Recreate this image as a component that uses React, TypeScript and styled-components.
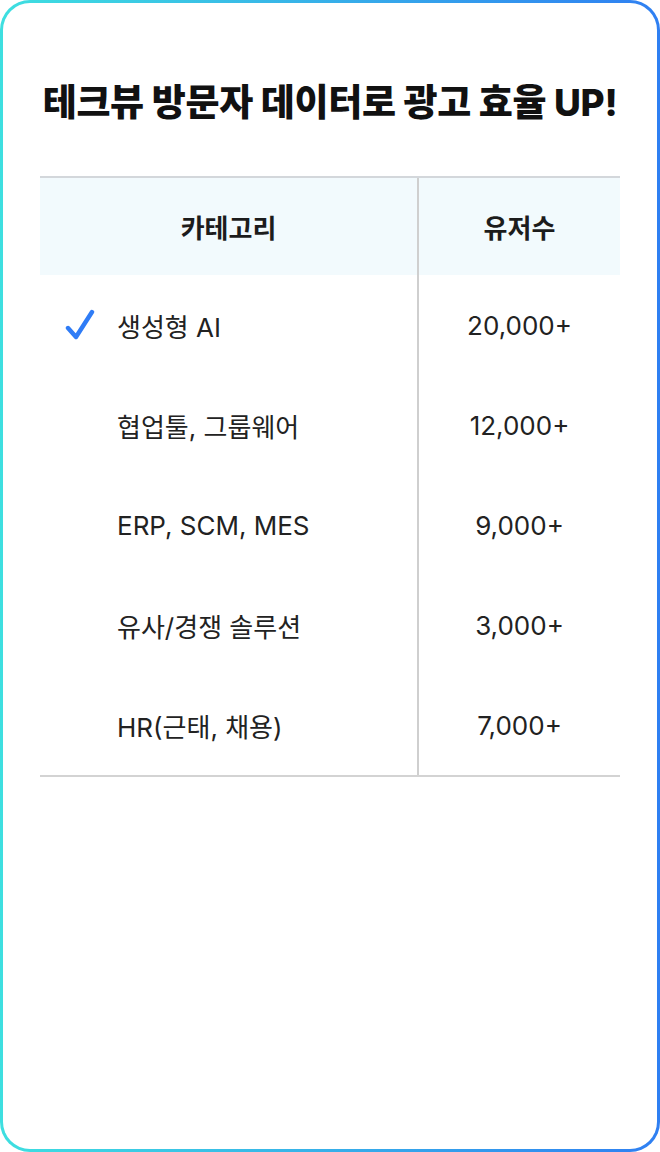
import styled, { createGlobalStyle } from 'styled-components'

const GlobalStyle = createGlobalStyle`
  html, body {
    margin: 0;
    padding: 0;
    background: #ffffff;
  }
  body {
    font-family: Inter, 'Noto Sans CJK KR', sans-serif;
  }
`

const rows = [
  { name: '생성형 AI', users: '20,000+', checked: true },
  { name: '협업툴, 그룹웨어', users: '12,000+', checked: false },
  { name: 'ERP, SCM, MES', users: '9,000+', checked: false },
  { name: '유사/경쟁 솔루션', users: '3,000+', checked: false },
  { name: 'HR(근태, 채용)', users: '7,000+', checked: false },
]

export default function App() {
  return (
    <>
      <GlobalStyle />
      <Frame>
        <Card>
          <Title>테크뷰 방문자 데이터로 광고 효율 UP!</Title>
          <Table>
            <HeadRow>
              <HeadCell>카테고리</HeadCell>
              <HeadCell $last>유저수</HeadCell>
            </HeadRow>
            {rows.map((row) => (
              <Row key={row.name}>
                <NameCell>
                  <CheckSlot>
                    {row.checked && (
                      <svg width='32' height='32' viewBox='0 0 32 32'>
                        <path
                          d='M4 19 L12 28 L28 3'
                          fill='none'
                          stroke='#2f7cf6'
                          strokeWidth='4.4'
                          strokeLinecap='round'
                          strokeLinejoin='round'
                        />
                      </svg>
                    )}
                  </CheckSlot>
                  {row.name}
                </NameCell>
                <CountCell>{row.users}</CountCell>
              </Row>
            ))}
          </Table>
        </Card>
      </Frame>
    </>
  )
}

const Frame = styled.div`
  width: 660px;
  height: 1152px;
  box-sizing: border-box;
  padding: 3px;
  border-radius: 30px;
  background: linear-gradient(90deg, #3edfe0 0%, #2f7ff2 100%);
`

const Card = styled.div`
  height: 100%;
  box-sizing: border-box;
  border-radius: 27px;
  background: #ffffff;
  padding: 77px 37px 0;
`

const Title = styled.h1`
  margin: 0 0 50px;
  text-align: center;
  font-size: 37px;
  line-height: 46px;
  font-weight: 800;
  color: #111111;
  letter-spacing: -0.3px;
  white-space: nowrap;
`

const Table = styled.div`
  display: grid;
  grid-template-columns: 379px 1fr;
  border-top: 2px solid #d3d7db;
  border-bottom: 2px solid #d3d3d3;
`

const HeadRow = styled.div`
  display: contents;
`

const HeadCell = styled.div<{ $last?: boolean }>`
  height: 97px;
  display: flex;
  align-items: center;
  justify-content: center;
  background: #f2fafd;
  font-size: 26px;
  font-weight: 600;
  color: #1c1c1c;
  ${(p) => (p.$last ? '' : 'border-right: 2px solid #cfcfcf;')}
`

const Row = styled.div`
  display: contents;
`

const NameCell = styled.div`
  height: 100px;
  display: flex;
  align-items: center;
  border-right: 2px solid #cfcfcf;
  font-size: 26px;
  color: #222222;
  padding-left: 24px;
`

const CheckSlot = styled.span`
  width: 53px;
  height: 32px;
  display: flex;
  align-items: center;
`

const CountCell = styled.div`
  height: 100px;
  display: flex;
  align-items: center;
  justify-content: center;
  font-size: 26px;
  color: #222222;
`
